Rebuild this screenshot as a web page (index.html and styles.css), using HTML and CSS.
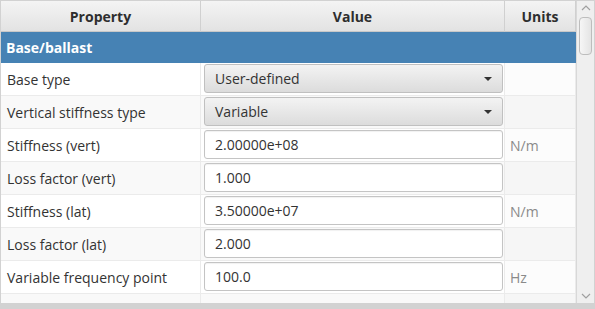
FILE: index.html
```html
<!DOCTYPE html>
<html lang="en">
<head>
    <meta charset="UTF-8">
    <title>Base properties</title>
    <link rel="stylesheet" href="styles.css">
</head>
<body>
    <div class="table-view">
        <div class="grid">
            <div class="row header">
                <div class="cell col-prop">Property</div>
                <div class="cell col-value">Value</div>
                <div class="cell col-units">Units</div>
            </div>

            <div class="row group">
                <div class="cell col-prop">Base/ballast</div>
                <div class="cell col-value"></div>
                <div class="cell col-units"></div>
            </div>

            <div class="row">
                <div class="cell col-prop">Base type</div>
                <div class="cell col-value"><div class="combo"><span>User-defined</span><span class="arrow"></span></div></div>
                <div class="cell col-units"></div>
            </div>
            <div class="row odd">
                <div class="cell col-prop">Vertical stiffness type</div>
                <div class="cell col-value"><div class="combo"><span>Variable</span><span class="arrow"></span></div></div>
                <div class="cell col-units"></div>
            </div>
            <div class="row">
                <div class="cell col-prop">Stiffness (vert)</div>
                <div class="cell col-value"><div class="field">2.00000e+08</div></div>
                <div class="cell col-units">N/m</div>
            </div>
            <div class="row odd">
                <div class="cell col-prop">Loss factor (vert)</div>
                <div class="cell col-value"><div class="field">1.000</div></div>
                <div class="cell col-units"></div>
            </div>
            <div class="row">
                <div class="cell col-prop">Stiffness (lat)</div>
                <div class="cell col-value"><div class="field">3.50000e+07</div></div>
                <div class="cell col-units">N/m</div>
            </div>
            <div class="row odd">
                <div class="cell col-prop">Loss factor (lat)</div>
                <div class="cell col-value"><div class="field">2.000</div></div>
                <div class="cell col-units"></div>
            </div>
            <div class="row">
                <div class="cell col-prop">Variable frequency point</div>
                <div class="cell col-value"><div class="field">100.0</div></div>
                <div class="cell col-units">Hz</div>
            </div>
            <div class="row odd">
                <div class="cell col-prop"></div>
                <div class="cell col-value"></div>
                <div class="cell col-units"></div>
            </div>
        </div>

        <div class="scrollbar">
            <div class="scroll-btn">
                <svg width="10" height="6" viewBox="0 0 10 6"><path d="M1 5 L5 1 L9 5" fill="none" stroke="#a0a0a0" stroke-width="1.2"/></svg>
            </div>
            <div class="track"><div class="thumb"></div></div>
            <div class="scroll-btn">
                <svg width="10" height="6" viewBox="0 0 10 6"><path d="M1 1 L5 5 L9 1" fill="none" stroke="#a0a0a0" stroke-width="1.2"/></svg>
            </div>
        </div>
    </div>
</body>
</html>
```

FILE: styles.css
```css
body {
    margin: 0;
    width: 595px;
    height: 309px;
    background: #d2d2d2;
    font-family: "Open Sans", "Noto Sans", sans-serif;
    font-size: 14px;
    color: #333;
    overflow: hidden;
}

.table-view {
    display: flex;
    margin: 1px 1px 0 1px;
    height: 302px;
    background: #fff;
    overflow: hidden;
}

.grid {
    flex: 1;
    display: flex;
    flex-direction: column;
}

.row {
    display: flex;
    height: 33px;
    flex-shrink: 0;
    background: #fff;
}

.row.odd {
    background: #f9f9f9;
}

.cell {
    display: flex;
    align-items: center;
    box-sizing: border-box;
    border-right: 1px solid #ebebeb;
    border-bottom: 1px solid #ebebeb;
    white-space: nowrap;
}

.col-prop {
    width: 200px;
    padding-left: 6px;
}

.col-value {
    width: 304px;
    padding: 1px 1px 2px 3px;
}

.col-units {
    width: 71px;
    padding-left: 5px;
    color: #8a8a8a;
    background: rgba(0, 0, 0, 0.012);
}

.header {
    height: 31px;
    background: linear-gradient(#f4f4f4, #e2e2e2);
}

.header .cell {
    justify-content: center;
    padding: 0;
    font-weight: bold;
    color: #2e2e2e;
    border-right: 1px solid #d0d0d0;
    border-bottom: 1px solid #c8c8c8;
    background: none;
}

.group {
    height: 31px;
    background: #4682b4;
}

.group .cell {
    border: none;
    background: none;
    color: #fff;
    font-weight: bold;
    padding-left: 5px;
}

.combo,
.field {
    flex: 1;
    height: 29px;
    box-sizing: border-box;
    border: 1px solid #c4c4c4;
    border-radius: 3px;
    display: flex;
    align-items: center;
    padding-left: 10px;
    color: #333;
}

.combo {
    justify-content: space-between;
    padding-right: 10px;
    background: linear-gradient(#f3f3f3, #dcdcdc);
    border-color: #c0c0c0;
}

.field {
    background: #fff;
    box-shadow: inset 0 1px 1px rgba(0, 0, 0, 0.06);
}

.arrow {
    width: 0;
    height: 0;
    border-left: 4px solid transparent;
    border-right: 4px solid transparent;
    border-top: 4px solid #333;
}

.scrollbar {
    width: 17px;
    display: flex;
    flex-direction: column;
    background: #efefef;
    border-left: 1px solid #d8d8d8;
}

.scroll-btn {
    height: 14px;
    display: flex;
    align-items: center;
    justify-content: center;
}

.track {
    flex: 1;
    padding: 2px 2px;
}

.thumb {
    height: 36px;
    border: 1px solid #bdbdbd;
    border-radius: 4px;
    background: linear-gradient(90deg, #f6f6f6, #e4e4e4);
}
```
